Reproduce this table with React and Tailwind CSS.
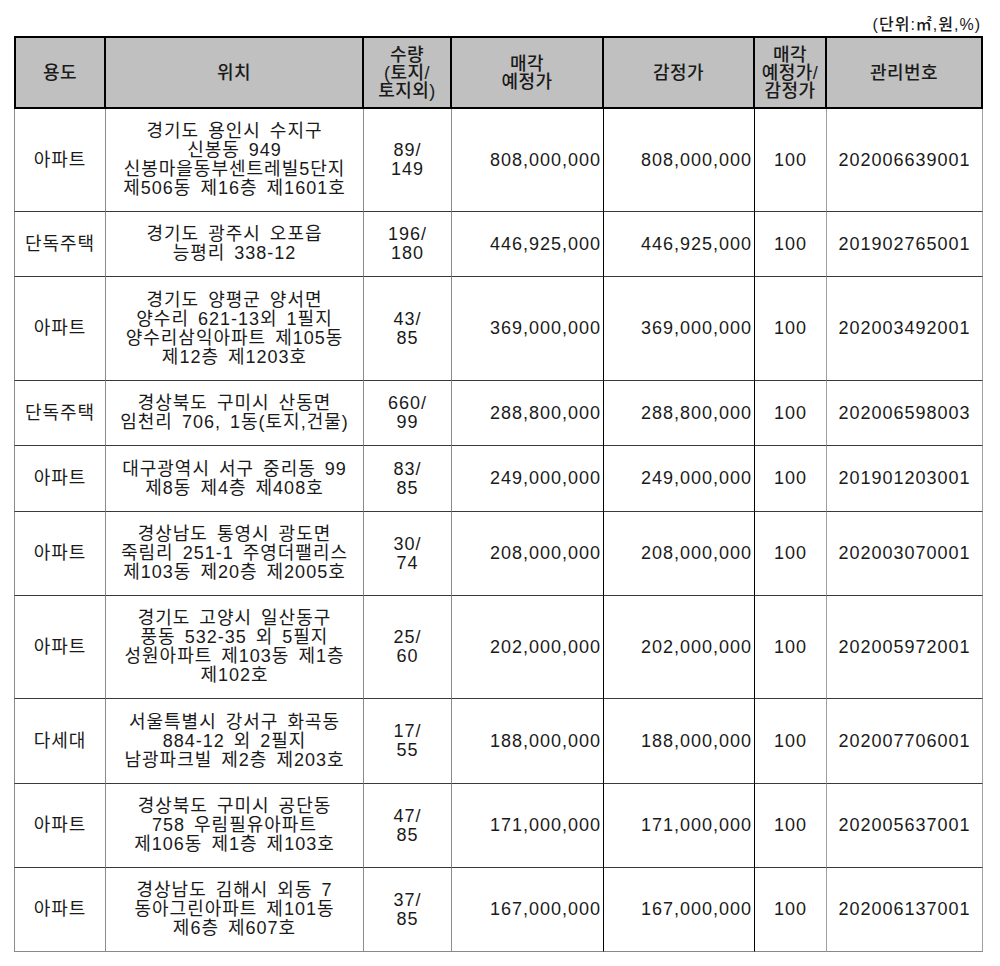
import React from "react";

const rows = [
  { use: "아파트", loc: ["경기도 용인시 수지구", "신봉동 949", "신봉마을동부센트레빌5단지", "제506동 제16층 제1601호"], qty: ["89/", "149"], sale: "808,000,000", appr: "808,000,000", ratio: "100", no: "202006639001", h: "h-[103px]" },
  { use: "단독주택", loc: ["경기도 광주시 오포읍", "능평리 338-12"], qty: ["196/", "180"], sale: "446,925,000", appr: "446,925,000", ratio: "100", no: "201902765001", h: "h-[65px]" },
  { use: "아파트", loc: ["경기도 양평군 양서면", "양수리 621-13외 1필지", "양수리삼익아파트 제105동", "제12층 제1203호"], qty: ["43/", "85"], sale: "369,000,000", appr: "369,000,000", ratio: "100", no: "202003492001", h: "h-[104px]" },
  { use: "단독주택", loc: ["경상북도 구미시 산동면", "임천리 706, 1동(토지,건물)"], qty: ["660/", "99"], sale: "288,800,000", appr: "288,800,000", ratio: "100", no: "202006598003", h: "h-[65px]" },
  { use: "아파트", loc: ["대구광역시 서구 중리동 99", "제8동 제4층 제408호"], qty: ["83/", "85"], sale: "249,000,000", appr: "249,000,000", ratio: "100", no: "201901203001", h: "h-[66px]" },
  { use: "아파트", loc: ["경상남도 통영시 광도면", "죽림리 251-1 주영더팰리스", "제103동 제20층 제2005호"], qty: ["30/", "74"], sale: "208,000,000", appr: "208,000,000", ratio: "100", no: "202003070001", h: "h-[84px]" },
  { use: "아파트", loc: ["경기도 고양시 일산동구", "풍동 532-35 외 5필지", "성원아파트 제103동 제1층", "제102호"], qty: ["25/", "60"], sale: "202,000,000", appr: "202,000,000", ratio: "100", no: "202005972001", h: "h-[103px]" },
  { use: "다세대", loc: ["서울특별시 강서구 화곡동", "884-12 외 2필지", "남광파크빌 제2층 제203호"], qty: ["17/", "55"], sale: "188,000,000", appr: "188,000,000", ratio: "100", no: "202007706001", h: "h-[85px]" },
  { use: "아파트", loc: ["경상북도 구미시 공단동", "758 우림필유아파트", "제106동 제1층 제103호"], qty: ["47/", "85"], sale: "171,000,000", appr: "171,000,000", ratio: "100", no: "202005637001", h: "h-[84px]" },
  { use: "아파트", loc: ["경상남도 김해시 외동 7", "동아그린아파트 제101동", "제6층 제607호"], qty: ["37/", "85"], sale: "167,000,000", appr: "167,000,000", ratio: "100", no: "202006137001", h: "h-[84px]" },
];

const font = { fontFamily: '"Liberation Sans", "Noto Sans CJK KR", sans-serif' };

function Lines({ lines }) {
  return (
    <div>
      {lines.map((l, i) => (
        <div key={i} className="whitespace-pre">{l}</div>
      ))}
    </div>
  );
}

export default function App() {
  const cols = "grid grid-cols-[92px_258px_88px_152px_151px_72px_156px]";
  const hc = "bg-[#c0c0c0] border-r-2 border-b-2 border-black flex items-center justify-center text-center";
  return (
    <div className="w-[1000px] h-[966px] bg-white text-[#1a1a1a]" style={font}>
      <div className="pt-[15px] pr-[19px] h-[36px] text-right text-[16px] leading-[20px] tracking-[1px] font-medium">
        (단위:㎡,원,%)
      </div>
      <div className="ml-[14px] w-[969px]">
        <div className={`${cols} h-[73px] border-t-2 border-black text-[18px] leading-[18px] font-medium tracking-[0.5px]`}>
          <div className={`${hc} border-l-2`}>용도</div>
          <div className={hc}>위치</div>
          <div className={hc}><Lines lines={["수량", "(토지/", "토지외)"]} /></div>
          <div className={hc}><Lines lines={["매각", "예정가"]} /></div>
          <div className={hc}>감정가</div>
          <div className={hc}><Lines lines={["매각", "예정가/", "감정가"]} /></div>
          <div className={hc}>관리번호</div>
        </div>
        {rows.map((r, i) => {
          const last = i === rows.length - 1;
          const bb = last ? "border-b border-b-[#888]" : "border-b border-b-[#3a3a3a]";
          const c = `${r.h} ${bb} flex items-center`;
          return (
            <div key={i} className={`${cols} text-[18px] leading-[19px] tracking-[1px] [word-spacing:3px]`}>
              <div className={`${c} border-l border-l-[#8c8c8c] border-r border-r-[#8c8c8c] justify-center`}>{r.use}</div>
              <div className={`${c} border-r border-r-[#8c8c8c] justify-center text-center`}><Lines lines={r.loc} /></div>
              <div className={`${c} border-r border-r-[#8c8c8c] justify-center text-center`}><Lines lines={r.qty} /></div>
              <div className={`${c} border-r border-r-black justify-end pr-[2px]`}>{r.sale}</div>
              <div className={`${c} border-r border-r-black justify-end pr-[2px]`}>{r.appr}</div>
              <div className={`${c} border-r border-r-[#a0a0a0] justify-center`}>{r.ratio}</div>
              <div className={`${c} border-r border-r-[#a0a0a0] justify-center`}>{r.no}</div>
            </div>
          );
        })}
      </div>
    </div>
  );
}
